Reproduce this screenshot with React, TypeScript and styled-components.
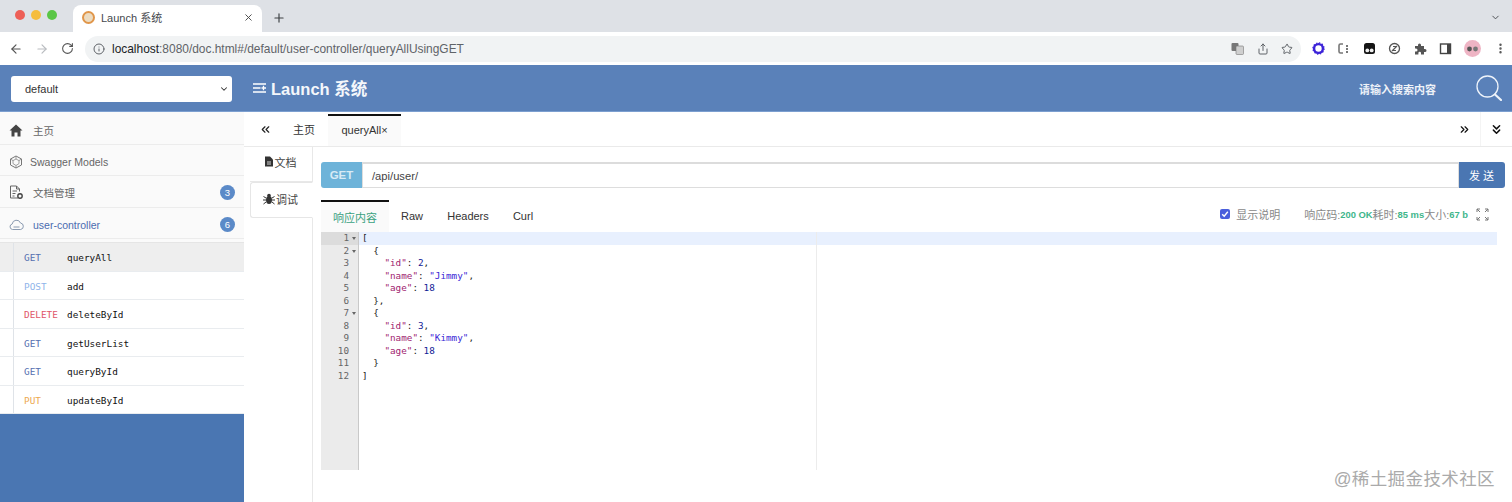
import React from "react";
import styled, { createGlobalStyle } from "styled-components";
import { ArrowLeft, ArrowRight, RotateCw, Info, Star, Share, X, Plus, ChevronDown, ChevronsLeft, ChevronsRight, ChevronsDown, MoreVertical } from "lucide-react";

const Global = createGlobalStyle`
  html, body { margin: 0; padding: 0; width: 1512px; height: 502px; overflow: hidden; background: #fff; }
  * { box-sizing: border-box; }
  body { font-family: "Liberation Sans", "Noto Sans CJK SC", sans-serif; }
`;

const Page = styled.div`position: relative; width: 1512px; height: 502px; display: flex; flex-direction: column; overflow: hidden;`;
const TabStrip = styled.div`height: 32px; background: #dee1e6; display: flex; align-items: flex-end; position: relative; padding-left: 73px;`;
const Lights = styled.div`position: absolute; left: 15px; top: 10px; display: flex; gap: 6px;`;
const Light = styled.span<{ $c: string }>`width: 10px; height: 10px; border-radius: 50%; background: ${p => p.$c};`;
const BrowserTab = styled.div`width: 189px; height: 27px; background: #fff; border-radius: 8px 8px 0 0; display: flex; align-items: center; padding: 0 8px 3px 9px; font-size: 11px; color: #45484d; gap: 6px;`;
const Favicon = styled.span`width: 13px; height: 13px; border-radius: 50%; background: #ecdcc2; border: 2px solid #e0964a;`;
const TabTitle = styled.span`flex: 1;`;
const NewTab = styled.div`margin: 0 0 3px 10px; height: 22px; display: flex; align-items: center; color: #3c4043;`;
const StripEnd = styled.div`position: absolute; right: 11px; top: 12px; color: #45484d; display: flex;`;
const Toolbar = styled.div`height: 33px; background: #fff; display: flex; align-items: center; padding: 0 0 0 9px;`;
const Nav = styled.div`display: flex; gap: 12px; align-items: center; width: 76px; color: #5f6368;`;
const Address = styled.div`width: 1216px; height: 26px; background: #f1f3f4; border-radius: 13px; display: flex; align-items: center; padding: 0 8px 0 8px; font-size: 11.93px; color: #5f6368; gap: 7px;`;
const Url = styled.span`flex: 1; white-space: nowrap;`;
const Host = styled.span`color: #202124;`;
const AddrIcons = styled.div`display: flex; align-items: center; gap: 12.5px; color: #5f6368; margin-right: 0;`;
const Exts = styled.div`display: flex; align-items: center; gap: 12.4px; margin-left: 11px; color: #555;`;
const Avatar = styled.span`width: 17px; height: 17px; border-radius: 50%; background: #eeb4c4; display: flex; align-items: center; justify-content: center; font-size: 0;`;

const Header = styled.header`height: 47px; background: #5a81b9; border-bottom: 1px solid #7c9fd0; display: flex; align-items: center; color: #fff;`;
const SelectBox = styled.div`width: 221px; height: 26px; margin: 2px 0 0 11px; background: #fff; border-radius: 3px; color: #333; font-size: 11px; display: flex; align-items: center; justify-content: space-between; padding: 0 3px 0 14px;`;
const Brand = styled.div`margin-left: 21px; font-size: 16.5px; font-weight: 700; display: flex; align-items: center; gap: 4px; flex: 1; color: #f4f7fb;`;
const SearchText = styled.div`font-size: 11px; font-weight: 700; color: #eef2f8; margin-right: 40px; margin-top: 2px;`;
const SearchBtn = styled.div`margin-right: 10px; display: flex; color: #eef3fa;`;

const Body = styled.div`flex: 1; display: flex; min-height: 0;`;
const Side = styled.aside`width: 244px; background: #4a76b2; display: flex; flex-direction: column;`;
const MenuItem = styled.div<{ $h: number; $top: number; $blue?: boolean }>`height: ${p => p.$h}px; background: #fafafa; border-bottom: 1px solid #ececec; display: flex; align-items: center; padding: ${p => p.$top}px 9px 0 9px; font-size: 10.5px; color: ${p => p.$blue ? "#4a6cb0" : "#666"};`;
const MenuIcon = styled.span<{ $w: number }>`width: ${p => p.$w}px; display: flex; align-items: center; color: #555;`;
const MenuLabel = styled.span`flex: 1;`;
const Badge = styled.span`width: 15px; height: 15px; border-radius: 50%; background: #5b8ac8; color: #fff; font-size: 9.5px; display: flex; align-items: center; justify-content: center;`;
const Spacer = styled.div`height: 4px; background: #fafafa; border-bottom: 1px solid #e5e5e5;`;
const ApiRow = styled.div<{ $active?: boolean }>`height: 28.5px; display: flex; background: ${p => p.$active ? "#eeeeee" : "#fff"}; border-bottom: 1px solid #e9ecef; font-family: "DejaVu Sans Mono", monospace; font-size: 9.4px;`;
const Rail = styled.div`width: 14px; border-right: 1px solid #dfe3e8;`;
const Method = styled.span<{ $c: string }>`width: 53px; padding-left: 10px; line-height: 29px; color: ${p => p.$c};`;
const ApiName = styled.span`line-height: 29px; color: #111;`;

const Main = styled.main`flex: 1; display: flex; flex-direction: column; min-width: 0; background: #fff;`;
const TabBar = styled.div`height: 35px; border-bottom: 1px solid #eaeaea; display: flex; align-items: stretch; font-size: 11px; color: #333;`;
const TabArrow = styled.div`width: 49px; display: flex; align-items: center; justify-content: center; color: #222; padding-right: 6px;`;
const TabPlain = styled.div`width: 35px; display: flex; align-items: center; color: #333;`;
const TabOn = styled.div`width: 73px; margin-top: 2px; border-top: 2px solid #111; background: #fafafa; display: flex; align-items: center; justify-content: center; color: #333; padding-bottom: 2px;`;
const Grow = styled.div`flex: 1;`;
const TabEnd = styled.div<{ $line?: boolean }>`width: 32px; display: flex; align-items: center; justify-content: center; color: #111; ${p => p.$line ? "border-left: 1px solid #f4f4f4;" : ""}`;

const Content = styled.div`flex: 1; display: flex; min-height: 0;`;
const VTabs = styled.div`width: 69px; padding-left: 6px; border-right: 1px solid #e8e8e8; display: flex; flex-direction: column; align-items: stretch;`;
const VTab = styled.div<{ $on?: boolean }>`height: ${p => p.$on ? 36 : 35}px; font-size: 11px; color: #444; display: flex; align-items: center; justify-content: center; gap: 1px; background: #fff; ${p => p.$on ? "border: 1px solid #e6e6e6; border-right-color:#fff; border-radius: 3px 0 0 3px; margin-right: -1px; padding-bottom: 2px;" : "border-bottom: 1px solid #e8e8e8; padding-bottom: 5px;"} padding-right: 2px;`;
const Panel = styled.div`flex: 1; padding: 15px 7px 0 8px; min-width: 0; display: flex; flex-direction: column;`;
const UrlRow = styled.div`height: 26px; display: flex;`;
const Verb = styled.div`width: 41px; background: #6db3d9; color: #d8ebf5; font-weight: 700; font-size: 11.5px; display: flex; align-items: center; justify-content: center; border-radius: 3px 0 0 3px;`;
const UrlInput = styled.div`flex: 1; border: 1px solid #ddd; border-top: 2px solid #dcdcdc; display: flex; align-items: center; padding-left: 9px; font-size: 11.2px; color: #444;`;
const Send = styled.div`width: 46px; background: #4a76b2; color: #fff; font-size: 11px; letter-spacing: 3px; display: flex; align-items: center; justify-content: center; border-radius: 0 3px 3px 0; padding-left: 2px;`;
const RespBar = styled.div`height: 32px; margin-top: 12px; display: flex; align-items: stretch; font-size: 11px; padding-right: 16px;`;
const RespTab = styled.div<{ $on?: boolean; $w: number }>`width: ${p => p.$w}px; display: flex; align-items: center; justify-content: center; color: ${p => p.$on ? "#3aa27f" : "#333"}; ${p => p.$on ? "border-top: 2px solid #111; background: #fafafa;" : ""}`;
const Status = styled.div`display: flex; align-items: center; color: #888; font-size: 11px; padding-bottom: 4px;`;
const Check = styled.span`width: 10px; height: 10px; background: #4a5fdc; border-radius: 2px; color: #fff; display: flex; align-items: center; justify-content: center; margin-right: 6px;`;
const Gap = styled.span`width: 24px;`;
const Ok = styled.b`color: #3fb68b; font-size: 9.4px;`;
const FullScreen = styled.span`margin-left: 8px; display: flex; color: #777;`;
const Editor = styled.div`height: 238px; margin-right: 8px; display: flex; font-family: "DejaVu Sans Mono", monospace; font-size: 9.3px; line-height: 12.55px; position: relative;`;
const Gutter = styled.div`width: 38px; background: #ebebeb; border-right: 1px solid #c9c9c9; color: #666; flex-shrink: 0;`;
const GutterLine = styled.div<{ $on?: boolean }>`height: 12.55px; text-align: right; padding-right: 9px; position: relative; background: ${p => p.$on ? "#dcdcdc" : "transparent"};`;
const Fold = styled.i`position: absolute; right: 2px; top: 5px; border-left: 2px solid transparent; border-right: 2px solid transparent; border-top: 3px solid #666;`;
const Code = styled.div`flex: 1; position: relative; padding-left: 3px; color: #222; white-space: pre;`;
const CodeLine = styled.div<{ $on?: boolean }>`height: 12.55px; background: ${p => p.$on ? "#e8f0fe" : "transparent"}; margin-left: -3px; padding-left: 3px;`;
const Margin = styled.div`position: absolute; left: 457px; top: 0; bottom: 0; width: 1px; background: #ececec;`;
const K = styled.span`color: #a0236f;`;
const S = styled.span`color: #3a27d6;`;
const N = styled.span`color: #111a96;`;
const Watermark = styled.div`position: absolute; right: 17px; bottom: 12px; font-size: 17.5px; color: #aaaaaa; letter-spacing: 0.4px;`;

const lines: React.ReactNode[] = [
  "[", "  {",
  <>{"    "}<K>"id"</K>: <N>2</N>,</>,
  <>{"    "}<K>"name"</K>: <S>"Jimmy"</S>,</>,
  <>{"    "}<K>"age"</K>: <N>18</N></>,
  "  },", "  {",
  <>{"    "}<K>"id"</K>: <N>3</N>,</>,
  <>{"    "}<K>"name"</K>: <S>"Kimmy"</S>,</>,
  <>{"    "}<K>"age"</K>: <N>18</N></>,
  "  }", "]",
];
const apis = [
  { m: "GET", c: "#5570b0", n: "queryAll", on: true },
  { m: "POST", c: "#8fb4ea", n: "add" },
  { m: "DELETE", c: "#e0566a", n: "deleteById" },
  { m: "GET", c: "#5570b0", n: "getUserList" },
  { m: "GET", c: "#5570b0", n: "queryById" },
  { m: "PUT", c: "#eda94f", n: "updateById" },
];

export default function App() {
  return (
    <Page>
      <Global />
      <TabStrip>
        <Lights><Light $c="#ed5f57" /><Light $c="#f5bd3e" /><Light $c="#5ac646" /></Lights>
        <BrowserTab><Favicon /><TabTitle>Launch 系统</TabTitle><X size={11} color="#444" /></BrowserTab>
        <NewTab><Plus size={14} strokeWidth={2} /></NewTab>
        <StripEnd><ChevronDown size={11} /></StripEnd>
      </TabStrip>
      <Toolbar>
        <Nav>
          <ArrowLeft size={14} color="#555" />
          <ArrowRight size={14} color="#b9bcc0" />
          <RotateCw size={13} color="#555" />
        </Nav>
        <Address>
          <Info size={12} />
          <Url><Host>localhost</Host>:8080/doc.html#/default/user-controller/queryAllUsingGET</Url>
          <AddrIcons>
            <svg width="13" height="13" viewBox="0 0 13 13"><rect x="0.5" y="1" width="7" height="8" rx="1" fill="#777" /><rect x="5" y="4" width="7.5" height="8.5" rx="1" fill="#cfcfcf" stroke="#777" strokeWidth=".6" /></svg>
            <Share size={12} />
            <Star size={12} />
          </AddrIcons>
        </Address>
        <Exts>
          <svg width="13" height="13" viewBox="0 0 13 13"><circle cx="6.5" cy="6.5" r="4.4" fill="none" stroke="#3b22d8" strokeWidth="2.4" /><circle cx="6.5" cy="6.5" r="5.6" fill="none" stroke="#3b22d8" strokeWidth="1.2" strokeDasharray="1.4 1.5" /></svg>
          <svg width="13" height="13" viewBox="0 0 13 13"><path d="M6 2H3.5Q2 2 2 3.5v6Q2 11 3.5 11H6" fill="none" stroke="#777" strokeWidth="1.6" /><rect x="9" y="3" width="2" height="2" fill="#777" /><rect x="9" y="6" width="2" height="2" fill="#777" /><rect x="9" y="9" width="2" height="2" fill="#777" /></svg>
          <svg width="13" height="13" viewBox="0 0 13 13"><rect x="1" y="1" width="11" height="11" rx="2.5" fill="#151515" /><circle cx="4.3" cy="8.4" r="1.9" fill="#eee" /><circle cx="8.7" cy="8.4" r="1.9" fill="#eee" /></svg>
          <svg width="13" height="13" viewBox="0 0 13 13"><circle cx="6.5" cy="6.5" r="5" fill="none" stroke="#555" strokeWidth="1.3" /><path d="M4 9l5-5M5 4.5h3M8 8.5H5" stroke="#555" strokeWidth="1.2" fill="none" /></svg>
          <svg width="13" height="13" viewBox="0 0 13 13"><path d="M1 4h3V3a1.5 1.5 0 013 0v1h3v3h1a1.5 1.5 0 010 3h-1v2.5H7V11a1.3 1.3 0 00-2.6 0v1.500H1V9.500h1a1.500 1.500 0 000-3H1z" fill="#555" /></svg>
          <svg width="13" height="13" viewBox="0 0 13 13"><rect x="1.500" y="2" width="10" height="9.500" fill="none" stroke="#444" strokeWidth="1.400" /><rect x="8" y="2" width="3.500" height="9.500" fill="#444" /></svg>
          <Avatar><svg width="13" height="6" viewBox="0 0 13 6"><circle cx="3.500" cy="3" r="2.400" fill="#555" /><circle cx="9.500" cy="3" r="2.400" fill="#777" /></svg></Avatar>
          <MoreVertical size={13} color="#555" strokeWidth={2.5} />
        </Exts>
      </Toolbar>
      <Header>
        <SelectBox>default<ChevronDown size={10} strokeWidth={2.5} color="#333" /></SelectBox>
        <Brand>
          <svg width="14" height="12" viewBox="0 0 14 12"><path d="M0 2h13M0 6h7.500M0 10h13M10.500 3.800v4.400M8.500 6h4.500" stroke="#fff" strokeWidth="1.300" fill="none" /></svg>
          Launch 系统
        </Brand>
        <SearchText>请输入搜索内容</SearchText>
        <SearchBtn>
          <svg width="26" height="26" viewBox="0 0 26 26"><circle cx="11.500" cy="11.500" r="10.500" fill="none" stroke="currentColor" strokeWidth="1.300" /><path d="M19 19.500L25 25" stroke="currentColor" strokeWidth="2.200" strokeLinecap="round" /></svg>
        </SearchBtn>
      </Header>
      <Body>
        <Side>
          <MenuItem $h={33} $top={4}>
            <MenuIcon $w={24}><svg width="14" height="13" viewBox="0 0 14 13"><path d="M7 0.500L0.500 6.500H2.500V12.500H5.500V8.500H8.500V12.500H11.500V6.500H13.500z" fill="#444" /></svg></MenuIcon>
            <MenuLabel>主页</MenuLabel>
          </MenuItem>
          <MenuItem $h={31} $top={3}>
            <MenuIcon $w={21}><svg width="14" height="14" viewBox="0 0 14 14"><path d="M7 1l5.500 3v6L7 13 1.500 10V4z" fill="none" stroke="#777" strokeWidth="1" /><path d="M7 4l3 1.600v3L7 10.500 4 8.600v-3zM7 1v3M7 10.500V13M1.500 4L4 5.600M12.500 4L10 5.600" fill="none" stroke="#888" strokeWidth=".8" /></svg></MenuIcon>
            <MenuLabel>Swagger Models</MenuLabel>
          </MenuItem>
          <MenuItem $h={32} $top={2}>
            <MenuIcon $w={24}><svg width="15" height="15" viewBox="0 0 15 15"><path d="M9 13H1.500V1H7.500L10.500 4V6.500M7.500 1V4h3" fill="none" stroke="#666" strokeWidth="1" /><path d="M3.500 6H8M3.500 8.500H6.500M3.500 11H5.500" stroke="#666" strokeWidth="1" /><circle cx="11" cy="11" r="2.200" fill="none" stroke="#444" strokeWidth="1.400" /></svg></MenuIcon>
            <MenuLabel>文档管理</MenuLabel>
            <Badge>3</Badge>
          </MenuItem>
          <MenuItem $h={31} $top={3} $blue>
            <MenuIcon $w={24}><svg width="15" height="12" viewBox="0 0 15 12"><path d="M3.500 10.500a2.800 2.800 0 01-.3-5.500A4.300 4.300 0 0111.500 4a3.300 3.300 0 01.2 6.500z" fill="none" stroke="#8a9ab0" strokeWidth="1" /><path d="M4.500 8h6" stroke="#8a9ab0" strokeWidth="1" /></svg></MenuIcon>
            <MenuLabel>user-controller</MenuLabel>
            <Badge>6</Badge>
          </MenuItem>
          <Spacer />
          {apis.map(a => (
            <ApiRow key={a.n} $active={a.on}>
              <Rail />
              <Method $c={a.c}>{a.m}</Method>
              <ApiName>{a.n}</ApiName>
            </ApiRow>
          ))}
        </Side>
        <Main>
          <TabBar>
            <TabArrow><ChevronsLeft size={13} strokeWidth={2.2} /></TabArrow>
            <TabPlain>主页</TabPlain>
            <TabOn>queryAll×</TabOn>
            <Grow />
            <TabEnd><ChevronsRight size={13} strokeWidth={2.2} /></TabEnd>
            <TabEnd $line><ChevronsDown size={15} strokeWidth={2.4} /></TabEnd>
          </TabBar>
          <Content>
            <VTabs>
              <VTab>
                <svg width="10" height="11" viewBox="0 0 10 11"><path d="M1 0.500H6L9 3.500V10.500H1z" fill="#333" /><path d="M3 6H7M3 8H7" stroke="#fff" strokeWidth=".8" /></svg>
                文档
              </VTab>
              <VTab $on>
                <svg width="12" height="12" viewBox="0 0 12 12"><ellipse cx="6" cy="7" rx="3" ry="4" fill="#333" /><circle cx="6" cy="2.500" r="1.800" fill="#333" /><path d="M0.500 3.500L3 5M11.500 3.500L9 5M0 7H3M12 7H9M0.500 11L3 9M11.500 11L9 9" stroke="#333" strokeWidth="1" /></svg>
                调试
              </VTab>
            </VTabs>
            <Panel>
              <UrlRow>
                <Verb>GET</Verb>
                <UrlInput>/api/user/</UrlInput>
                <Send>发送</Send>
              </UrlRow>
              <RespBar>
                <RespTab $on $w={68}>响应内容</RespTab>
                <RespTab $w={46}>Raw</RespTab>
                <RespTab $w={66}>Headers</RespTab>
                <RespTab $w={44}>Curl</RespTab>
                <Grow />
                <Status>
                  <Check><svg width="8" height="8" viewBox="0 0 8 8"><path d="M1.200 4.200L3.200 6.200 6.800 1.800" stroke="#fff" strokeWidth="1.400" fill="none" /></svg></Check>
                  显示说明
                  <Gap />
                  响应码:<Ok>200 OK</Ok>耗时:<Ok>85 ms</Ok>大小:<Ok>67 b</Ok>
                  <FullScreen>
                    <svg width="13" height="13" viewBox="0 0 13 13"><path d="M1 4V1h3M1 1l3 3M12 4V1H9M12 1L9 4M1 9v3h3M1 12l3-3M12 9v3H9M12 12L9 9" fill="none" stroke="currentColor" strokeWidth="1" /></svg>
                  </FullScreen>
                </Status>
              </RespBar>
              <Editor>
                <Gutter>
                  {lines.map((_, i) => (
                    <GutterLine key={i} $on={i === 0}>{i + 1}{(i === 0 || i === 1 || i === 6) && <Fold />}</GutterLine>
                  ))}
                </Gutter>
                <Code>
                  <Margin />
                  {lines.map((l, i) => <CodeLine key={i} $on={i === 0}>{l}</CodeLine>)}
                </Code>
              </Editor>
            </Panel>
          </Content>
        </Main>
      </Body>
      <Watermark>@稀土掘金技术社区</Watermark>
    </Page>
  );
}
